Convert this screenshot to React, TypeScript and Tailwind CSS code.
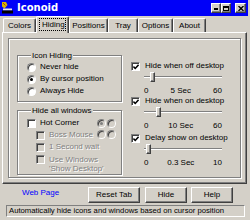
import React from "react";

const raised =
  "border border-t-white border-l-white border-r-[#404040] border-b-[#404040] shadow-[inset_-1px_-1px_0_#808080]";
const etched = "border border-[#808080] shadow-[inset_1px_1px_0_#fff,1px_1px_0_#fff]";
const disabledText = "text-[#808080] [text-shadow:1px_1px_0_#fff]";

function Radio({ checked, disabled }: { checked?: boolean; disabled?: boolean }) {
  return (
    <span
      className={`w-[9px] h-[9px] rounded-full shrink-0 border border-t-[#808080] border-l-[#808080] border-b-white border-r-white shadow-[inset_1px_1px_0_#404040] flex items-center justify-center ${
        disabled ? "bg-[#d4d0c8]" : "bg-white"
      }`}
    >
      {checked && (
        <span className={`w-[3px] h-[3px] rounded-full ${disabled ? "bg-[#808080]" : "bg-black"}`} />
      )}
    </span>
  );
}

function Check({ checked, disabled }: { checked?: boolean; disabled?: boolean }) {
  return (
    <span
      className={`w-[9px] h-[9px] shrink-0 border border-t-[#808080] border-l-[#808080] border-b-white border-r-white shadow-[inset_1px_1px_0_#404040] flex items-center justify-center pl-[1px] pt-[1px] ${
        disabled ? "bg-[#d4d0c8]" : "bg-white"
      }`}
    >
      {checked && (
        <svg width="6" height="6" viewBox="0 0 7 7">
          <path d="M0.5 3 L2.6 5.2 L6.5 1" stroke="black" strokeWidth="1.8" fill="none" />
        </svg>
      )}
    </span>
  );
}

function Tab({ label, w, selected }: { label: string; w: string; selected?: boolean }) {
  if (selected) {
    return (
      <div
        className={`${w} relative z-10 h-[17px] bg-[#d4d0c8] rounded-t-[2px] border-l border-t border-r border-l-white border-t-white border-r-[#404040] shadow-[inset_-1px_0_0_#808080] flex items-start justify-center pt-[1px]`}
      >
        <span className="border border-dotted border-black px-[2px] h-[13px] leading-[11px] w-[27px] text-center">
          {label}
        </span>
      </div>
    );
  }
  return (
    <div
      className={`${w} mt-[2px] h-[14px] rounded-t-[2px] border-l border-t border-r border-l-white border-t-white border-r-[#404040] shadow-[inset_-1px_0_0_#808080] flex items-center justify-center`}
    >
      {label}
    </div>
  );
}

function Slider({ value, max, left, mid, right }: { value: number; max: number; left: string; mid: string; right: string }) {
  const pos = Math.round((value / max) * 73);
  return (
    <>
      <div className="relative ml-[13px] w-[78px] h-[12px] flex items-center">
        <div className="w-full h-[2px] border-t border-t-[#808080] bg-white" />
        <div
          className={`absolute top-[1px] w-[5px] h-[10px] bg-[#d4d0c8] ${raised}`}
          style={{ left: pos }}
        />
      </div>
      <div className="ml-[13px] w-[78px] h-[10px] mt-[3px] flex items-center justify-between leading-[10px]">
        <span>{left}</span>
        <span>{mid}</span>
        <span>{right}</span>
      </div>
    </>
  );
}

function CheckRow({ label }: { label: string }) {
  return (
    <div className="h-[10px] flex items-center">
      <Check checked />
      <span className="ml-[5px] leading-[10px]">{label}</span>
    </div>
  );
}

export default function App() {
  return (
    <div className="w-[250px] h-[220px] overflow-hidden bg-[#d4d0c8] text-black text-[8px] font-['Liberation_Sans',Arial,sans-serif] flex flex-col">
      {/* Title bar */}
      <div className="w-[248px] h-[16px] bg-[#0000f8] flex items-center shrink-0">
        <svg width="12" height="12" viewBox="0 0 12 12" className="ml-[1px]">
          <path d="M1 0 L5 0 L6.5 3 L3.5 6.5 L1 4.5 Z" fill="#d8b400" />
          <path d="M2 1 L4.5 3.5" stroke="#b04000" strokeWidth="1" />
          <rect x="2" y="6.5" width="9" height="2" fill="#e8e8e8" />
          <rect x="1" y="8.5" width="11" height="3" fill="#000" />
        </svg>
        <span className="ml-[4px] text-white font-bold text-[10px] font-['DejaVu_Sans',sans-serif] leading-[12px]">
          Iconoid
        </span>
        <div className="ml-auto flex items-center">
          <div className={`w-[10px] h-[10px] bg-[#d4d0c8] ${raised} flex items-end pl-[2px] pb-[2px]`}>
            <div className="w-[4px] h-[2px] bg-black" />
          </div>
          <div className={`w-[10px] h-[10px] bg-[#d4d0c8] ${raised} flex items-center justify-center`}>
            <div className="w-[6px] h-[5px] border border-t-2 border-black" />
          </div>
          <div className={`ml-[4px] mr-[2px] w-[11px] h-[10px] bg-[#d4d0c8] ${raised} flex items-center justify-center`}>
            <svg width="6" height="5" viewBox="0 0 6 5">
              <path d="M0.5 0 L5.5 5 M5.5 0 L0.5 5" stroke="black" strokeWidth="1.4" />
            </svg>
          </div>
        </div>
      </div>

      {/* Tabs */}
      <div className="h-[16px] flex items-start pl-[3px] shrink-0">
        <Tab label="Colors" w="w-[33px]" />
        <Tab label="Hiding" w="w-[33px]" selected />
        <Tab label="Positions" w="w-[39px]" />
        <Tab label="Tray" w="w-[30px]" />
        <Tab label="Options" w="w-[35px]" />
        <Tab label="About" w="w-[33px]" />
      </div>

      {/* Panel */}
      <div className={`ml-[2px] w-[245px] h-[152px] shrink-0 p-[5px] ${raised}`}>
        <div className={`w-full h-full ${etched} flex items-start pl-[8px]`}>
          {/* Left column */}
          <div className="w-[105px] mt-[12px] flex flex-col">
            <fieldset className={`w-[105px] ${etched} pl-[9px] pb-[4px]`}>
              <legend className="ml-[4px] px-[1px] leading-[9px] bg-[#d4d0c8]">Icon Hiding</legend>
              <div className="pt-[1px]">
                <div className="h-[12px] flex items-center">
                  <Radio />
                  <span className="ml-[4px]">Never hide</span>
                </div>
                <div className="h-[12px] flex items-center">
                  <Radio checked />
                  <span className="ml-[4px]">By cursor position</span>
                </div>
                <div className="h-[12px] flex items-center">
                  <Radio />
                  <span className="ml-[4px]">Always Hide</span>
                </div>
              </div>
            </fieldset>
            <fieldset className={`mt-[4px] w-[105px] ${etched} pl-[9px] pb-[1px]`}>
              <legend className="ml-[4px] px-[1px] leading-[9px] bg-[#d4d0c8]">Hide all windows</legend>
              <div className="pt-[2px] flex items-start">
                <div className="flex flex-col">
                  <div className="h-[12px] flex items-center">
                    <Check />
                    <span className="ml-[4px]">Hot Corner</span>
                  </div>
                  <div className="h-[12px] flex items-center pl-[9px]">
                    <Check disabled />
                    <span className={`ml-[4px] ${disabledText}`}>Boss Mouse</span>
                  </div>
                </div>
                <div className="ml-auto mr-[5px] mt-[2px] grid grid-cols-2 gap-x-[1px] gap-y-[2px]">
                  <Radio checked disabled />
                  <Radio disabled />
                  <Radio disabled />
                  <Radio disabled />
                </div>
              </div>
              <div className="h-[12px] flex items-center pl-[9px]">
                <Check disabled />
                <span className={`ml-[4px] ${disabledText}`}>1 Second wait</span>
              </div>
              <div className="mt-[2px] flex items-start pl-[9px]">
                <Check disabled />
                <span className={`ml-[4px] leading-[9px] ${disabledText}`}>
                  Use Windows
                  <br />
                  'Show Desktop'
                </span>
              </div>
            </fieldset>
          </div>

          {/* Right column */}
          <div className="ml-[9px] pt-[22px] flex flex-col">
            <CheckRow label="Hide when off desktop" />
            <Slider value={5} max={60} left="0" mid="5 Sec" right="60" />
            <CheckRow label="Hide when on desktop" />
            <Slider value={10} max={60} left="0" mid="10 Sec" right="60" />
            <div className="mt-[2px]" />
            <CheckRow label="Delay show on desktop" />
            <Slider value={0.3} max={10} left="0" mid="0.3 Sec" right="10" />
          </div>
        </div>
      </div>

      {/* Buttons */}
      <div className="mt-[3px] h-[16px] flex items-start shrink-0">
        <div className="w-[88px] pl-[22px] pt-[1px] leading-[10px] text-[#0000ff]">Web Page</div>
        <div className={`w-[52px] h-[16px] ${raised} flex items-center justify-center`}>Reset Tab</div>
        <div className={`ml-[5px] w-[42px] h-[16px] ${raised} flex items-center justify-center`}>Hide</div>
        <div className={`ml-[4px] w-[42px] h-[16px] ${raised} flex items-center justify-center`}>Help</div>
      </div>

      {/* Status bar */}
      <div className="mt-[2px] ml-[6px] w-[239px] h-[12px] shrink-0 border border-t-[#808080] border-l-[#808080] border-b-white border-r-white pl-[2px] flex items-center whitespace-nowrap overflow-hidden text-[7.7px]">
        Automatically hide icons and windows based on cursor position
      </div>
    </div>
  );
}
